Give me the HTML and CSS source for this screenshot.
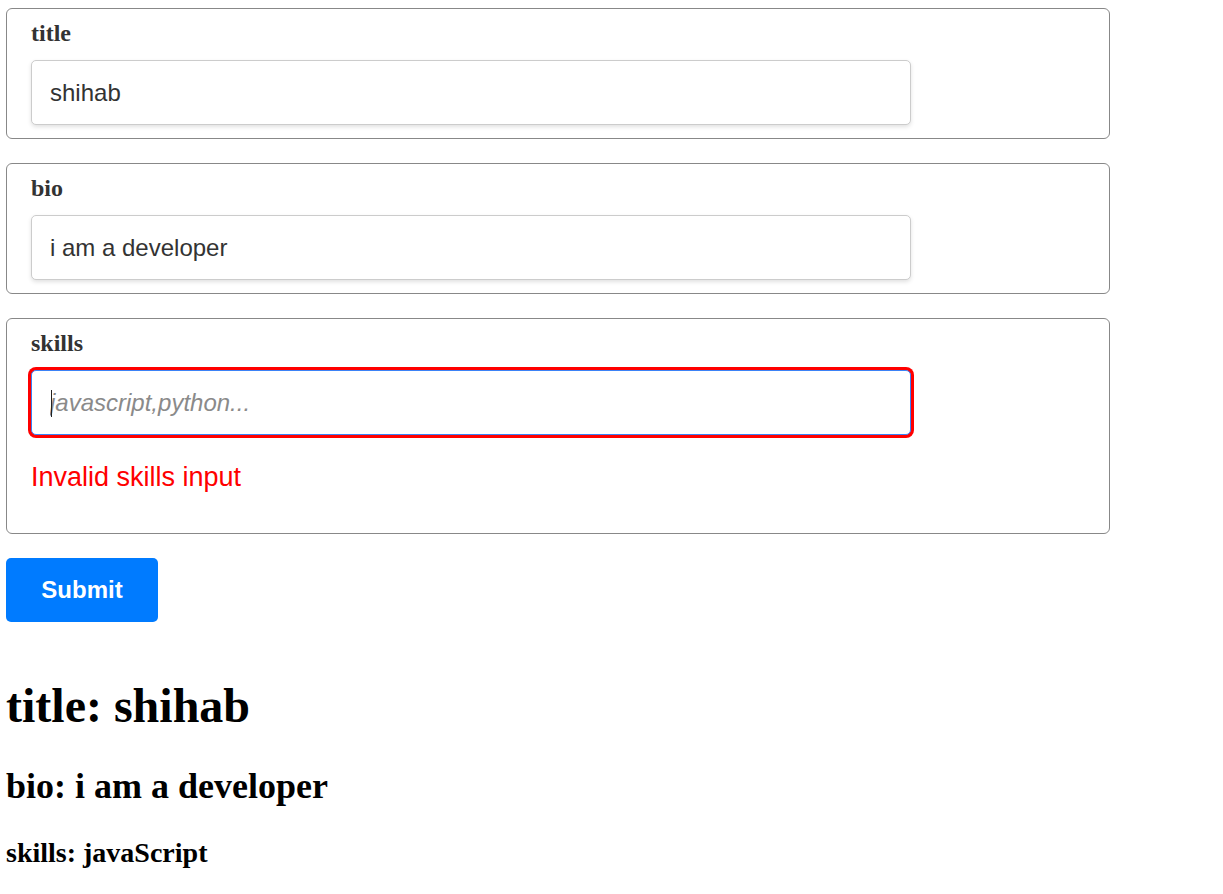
FILE: index.html
```html
<!DOCTYPE html>
<html>
<head>
<meta charset="utf-8">
<link rel="stylesheet" href="styles.css">
</head>
<body>
<form class="form">
  <div class="card">
    <label class="label">title</label>
    <input class="field" type="text" value="shihab">
  </div>
  <div class="card">
    <label class="label">bio</label>
    <input class="field" type="text" value="i am a developer">
  </div>
  <div class="card">
    <label class="label">skills</label>
    <div class="field-wrap">
      <input class="field field-error" type="text" placeholder="javascript,python...">
      <span class="caret"></span>
    </div>
    <p class="error">Invalid skills input</p>
  </div>
  <button class="submit" type="button">Submit</button>
</form>
<h1 class="out-title">title: shihab</h1>
<h2 class="out-bio">bio: i am a developer</h2>
<h3 class="out-skills">skills: javaScript</h3>
</body>
</html>
```
FILE: styles.css
```css
html, body {
  margin: 0;
  padding: 0;
  background: #fff;
}
body {
  padding: 8px 6px;
  font-family: "Liberation Serif", "Times New Roman", serif;
  color: #000;
}
.form {
  width: 1104px;
  padding-bottom: 24px;
}
.card {
  border: 1px solid #888;
  border-radius: 6px;
  padding: 11px 24px 13px;
  margin-bottom: 24px;
}
.label {
  display: block;
  font-family: "Liberation Serif", serif;
  font-weight: bold;
  font-size: 24px;
  line-height: 27px;
  color: #333;
  margin-bottom: 13px;
}
.field-wrap {
  position: relative;
  width: 880px;
}
.field {
  display: block;
  box-sizing: border-box;
  width: 880px;
  height: 65px;
  padding: 0 18px;
  border: 1px solid #ccc;
  border-radius: 5px;
  box-shadow: 0 2px 4px rgba(0, 0, 0, 0.12);
  font-family: "Liberation Sans", Arial, sans-serif;
  font-size: 24px;
  color: #333;
  background: #fff;
  outline: none;
}
.field::placeholder {
  color: #8a8a8a;
  font-style: italic;
}
.field-error {
  border: 1px solid #3b82f6;
  box-shadow: 0 0 0 3px #ff0000;
}
.caret {
  position: absolute;
  left: 20px;
  top: 20px;
  width: 1px;
  height: 27px;
  background: #222;
}
.error {
  margin: 27px 0 27px;
  font-family: "Liberation Sans", Arial, sans-serif;
  font-size: 27px;
  line-height: 31px;
  color: #ff0000;
}
.submit {
  display: block;
  width: 152px;
  height: 64px;
  border: none;
  border-radius: 5px;
  background: #007bff;
  color: #fff;
  font-family: "Liberation Sans", Arial, sans-serif;
  font-weight: bold;
  font-size: 24px;
  padding: 0;
}
.out-title {
  font-size: 48px;
  margin: 32px 0;
}
.out-bio {
  font-size: 36px;
  margin: 30px 0;
}
.out-skills {
  font-size: 28px;
  margin: 30px 0;
}
```
